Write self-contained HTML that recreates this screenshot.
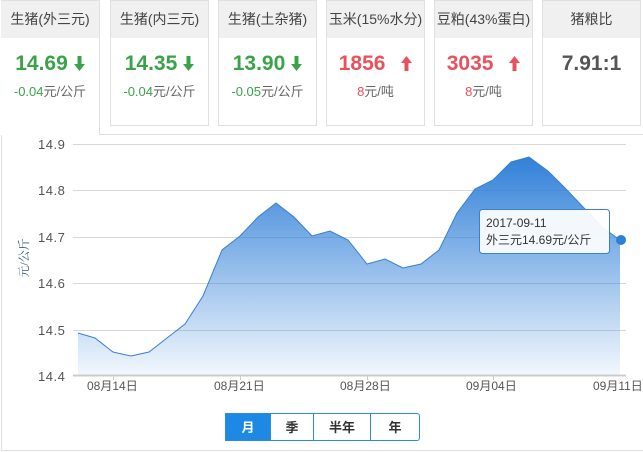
<!DOCTYPE html>
<html><head><meta charset="utf-8"><style>
*{margin:0;padding:0;box-sizing:border-box}
body{width:643px;height:452px;background:#fff;font-family:"Liberation Sans","Noto Sans CJK SC",sans-serif;position:relative;overflow:hidden}
.card{position:absolute;top:0;width:99px;height:126px;border:1px solid #e0e0e0;background:#fff;text-align:center}
.card .h{height:37px;background:#f0f0f0;line-height:37px;font-size:14px;color:#444}
.card .n{margin-top:13px;font-size:21px;font-weight:bold;line-height:26px}
.card .s{margin-top:4px;font-size:13px;color:#666}
.g{color:#3aa34a}.r{color:#e8525c}
.card svg{vertical-align:-1px;margin-left:6px}
.btn{position:absolute;top:413px;height:28px;line-height:28px;text-align:center;font-size:13px;font-weight:bold;color:#333;border:1px solid #2a8be0}
</style></head><body>
<div style="position:absolute;left:1px;top:0;width:100px;height:451px;border-left:1px solid #ddd"></div>
<div style="position:absolute;left:100px;top:134px;width:543px;border-top:1px solid #ddd"></div>
<div style="position:absolute;left:1px;top:450px;width:642px;border-top:1px solid #ddd"></div>
<div class="card" style="left:1px;height:135px;border-bottom:none;border-left:none"><div class="h">生猪(外三元)</div><div class="n g">14.69<svg width="11" height="15"><path d="M3.5,0H7.5V8H11L5.5,15L0,8H3.5Z" fill="#3aa34a"/></svg></div><div class="s"><span class="g">-0.04</span>元/公斤</div></div>
<div class="card" style="left:110px"><div class="h">生猪(内三元)</div><div class="n g">14.35<svg width="11" height="15"><path d="M3.5,0H7.5V8H11L5.5,15L0,8H3.5Z" fill="#3aa34a"/></svg></div><div class="s"><span class="g">-0.04</span>元/公斤</div></div>
<div class="card" style="left:218px"><div class="h">生猪(土杂猪)</div><div class="n g">13.90<svg width="11" height="15"><path d="M3.5,0H7.5V8H11L5.5,15L0,8H3.5Z" fill="#3aa34a"/></svg></div><div class="s"><span class="g">-0.05</span>元/公斤</div></div>
<div class="card" style="left:326px"><div class="h">玉米(15%水分)</div><div class="n r">1856 <svg width="11" height="15" style="margin-left:10px"><path d="M3.5,15H7.5V7H11L5.5,0L0,7H3.5Z" fill="#e8525c"/></svg></div><div class="s"><span class="r">8</span>元/吨</div></div>
<div class="card" style="left:434px"><div class="h">豆粕(43%蛋白)</div><div class="n r">3035 <svg width="11" height="15" style="margin-left:10px"><path d="M3.5,15H7.5V7H11L5.5,0L0,7H3.5Z" fill="#e8525c"/></svg></div><div class="s"><span class="r">8</span>元/吨</div></div>
<div class="card" style="left:542px"><div class="h">猪粮比</div><div class="n" style="color:#555">7.91:1</div></div>
<svg style="position:absolute;left:0;top:0" width="643" height="452">
<defs><linearGradient id="gr" gradientUnits="userSpaceOnUse" x1="0" y1="155" x2="0" y2="375"><stop offset="0" stop-color="#2f7fd8"/><stop offset="1" stop-color="#2f7fd8" stop-opacity="0.06"/></linearGradient></defs>
<g stroke="#d8d8d8" stroke-width="1">
<line x1="73" y1="144.5" x2="626" y2="144.5"/><line x1="73" y1="190.5" x2="626" y2="190.5"/><line x1="73" y1="237.5" x2="626" y2="237.5"/><line x1="73" y1="283.5" x2="626" y2="283.5"/><line x1="73" y1="330.5" x2="626" y2="330.5"/>
</g>
<path d="M78,333 L95,338 L113,352 L131,356 L149,352 L167,338 L185,324 L203,296 L222,250 L240,236 L258,217 L276,203 L294,217 L312,236 L330,231 L348,240 L367,264 L385,259 L403,268 L421,264 L439,250 L457,213 L475,189 L493,180 L511,162 L529,157 L548,171 L566,189 L584,208 L602,227 L620,240 L620,375 L78,375Z" fill="url(#gr)" stroke="none"/>
<path d="M78,333 L95,338 L113,352 L131,356 L149,352 L167,338 L185,324 L203,296 L222,250 L240,236 L258,217 L276,203 L294,217 L312,236 L330,231 L348,240 L367,264 L385,259 L403,268 L421,264 L439,250 L457,213 L475,189 L493,180 L511,162 L529,157 L548,171 L566,189 L584,208 L602,227 L620,240" fill="none" stroke="#3b7fd0" stroke-width="1"/>
<line x1="73" y1="375.5" x2="626" y2="375.5" stroke="#ccc" stroke-width="2"/>
<g stroke="#ccc"><line x1="113.5" y1="375" x2="113.5" y2="380"/><line x1="240.5" y1="375" x2="240.5" y2="380"/><line x1="367.5" y1="375" x2="367.5" y2="380"/><line x1="493.5" y1="375" x2="493.5" y2="380"/></g>
<circle cx="621" cy="240" r="5" fill="#2f7fd8"/>
<g font-size="13" fill="#555" font-family="Liberation Sans,sans-serif" letter-spacing="0.5">
<text x="38" y="149">14.9</text><text x="38" y="195">14.8</text><text x="38" y="242">14.7</text><text x="38" y="288">14.6</text><text x="38" y="335">14.5</text><text x="38" y="381">14.4</text>
</g>
<g font-size="12" fill="#555" font-family="Liberation Sans,Noto Sans CJK SC,sans-serif">
<text x="87" y="390">08月14日</text><text x="214" y="390">08月21日</text><text x="340" y="390">08月28日</text><text x="466" y="390">09月04日</text><text x="593" y="390">09月11日</text>
</g>
<text transform="translate(28,258) rotate(-90)" text-anchor="middle" font-size="12" fill="#3a5a80" font-family="Liberation Serif,Noto Serif CJK SC,serif">元/公斤</text>
<rect x="479.5" y="209.5" width="130" height="44" rx="3" fill="#fff" fill-opacity="0.92" stroke="#3b7fd0"/>
<text x="486" y="227" font-size="12" fill="#333" font-family="Liberation Sans,Noto Sans CJK SC,sans-serif">2017-09-11</text>
<text x="486" y="244" font-size="12" fill="#333" font-family="Liberation Sans,Noto Sans CJK SC,sans-serif">外三元14.69元/公斤</text>
</svg>
<div class="btn" style="left:225px;width:46px;background:#1e88e5;color:#fff">月</div>
<div class="btn" style="left:270px;width:44px">季</div>
<div class="btn" style="left:313px;width:58px">半年</div>
<div class="btn" style="left:370px;width:50px;border-radius:0 3px 3px 0">年</div>
</body></html>
